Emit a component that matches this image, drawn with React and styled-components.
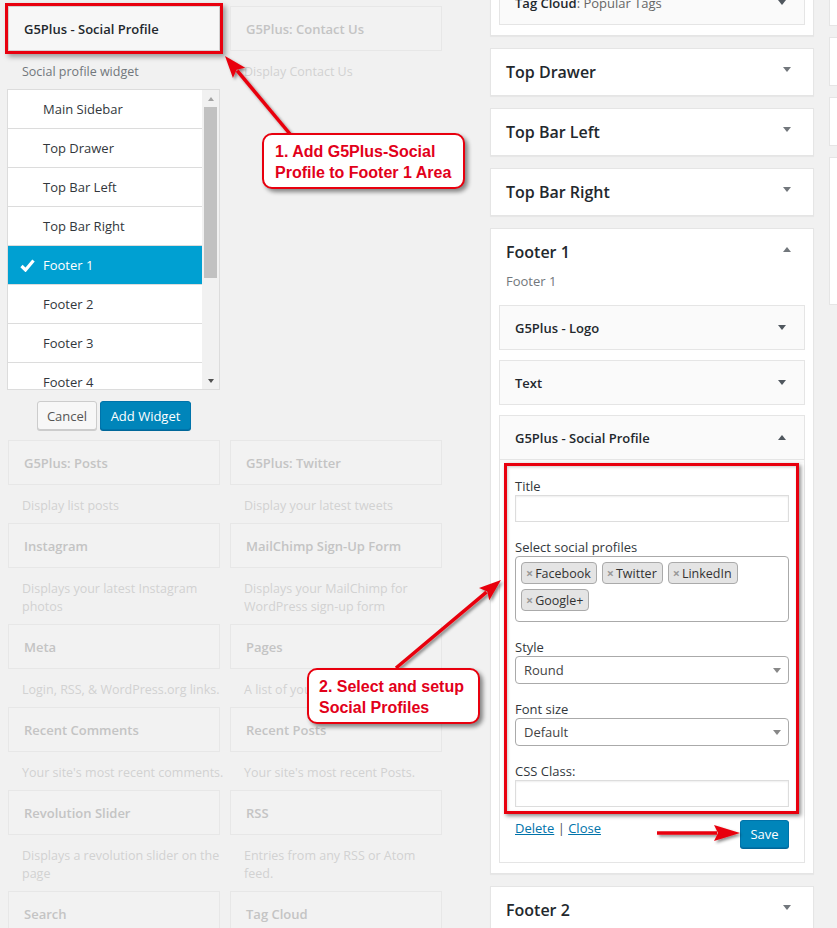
import React from "react";
import styled, { createGlobalStyle, css } from "styled-components";

const Global = createGlobalStyle`
  html, body { margin: 0; padding: 0; background: #f1f1f1; }
  body {
    font-family: "Open Sans", "Noto Sans", Arial, sans-serif;
    font-size: 13px;
    color: #444;
  }
  * { box-sizing: border-box; }
`;

const RED = "#e8000e";

const Page = styled.div`
  position: relative;
  width: 837px;
  height: 928px;
  overflow: hidden;
  display: flex;
  align-items: flex-start;
`;

/* ---------- available widgets ---------- */
const Available = styled.div`
  width: 442px;
  flex: none;
  padding: 6px 0 0 8px;
  display: grid;
  grid-template-columns: 212px 212px;
  column-gap: 10px;
  align-items: start;
`;

const WidgetItem = styled.div``;

const Tile = styled.div`
  height: 45px;
  border: 1px solid ${(p) => (p.$active ? "#d2d2d2" : "#e7e7e7")};
  background: ${(p) => (p.$active ? "#f7f7f7" : "#f2f2f2")};
  padding: 1px 15px 0;
  display: flex;
  align-items: center;
  font-weight: 600;
  font-size: 13px;
  color: ${(p) => (p.$active ? "#23282d" : "#c4c4c4")};
  white-space: nowrap;
  ${(p) =>
    p.$active &&
    css`
      box-shadow: 0 0 0 3px ${RED}, 3px 3px 5px 3px rgba(0, 0, 0, 0.35);
    `}
`;

const Desc = styled.div`
  margin: 12px 0 8px;
  padding: 0 0 0 14px;
  line-height: 18px;
  font-size: 12.5px;
  color: ${(p) => (p.$active ? "#72777c" : "#d2d2d2")};
`;

const DescLine = styled.span`
  display: block;
  white-space: nowrap;
`;

const ChooserList = styled.div`
  height: 301px;
  margin-left: -1px;
  border: 1px solid #dcdcdc;
  background: #fff;
  display: flex;
`;

const Items = styled.div`
  flex: 1;
  overflow: hidden;
`;

const Item = styled.div`
  height: 39px;
  border-bottom: 1px solid #dcdcdc;
  padding-left: 12px;
  display: flex;
  align-items: center;
  font-size: 13px;
  color: ${(p) => (p.$selected ? "#fff" : "#32373c")};
  background: ${(p) => (p.$selected ? "#00a0d2" : "#fff")};
`;

const CheckSlot = styled.span`
  width: 23px;
  flex: none;
  display: flex;
  align-items: center;
`;

const Track = styled.div`
  width: 17px;
  flex: none;
  background: #f1f1f1;
  display: flex;
  flex-direction: column;
`;

const TrackButton = styled.div`
  height: 17px;
  display: flex;
  align-items: center;
  justify-content: center;
`;

const Thumb = styled.div`
  height: 171px;
  margin: 0 2px;
  background: #c1c1c1;
`;

const TrackFill = styled.div`
  flex: 1;
`;

const Triangle = styled.span`
  display: inline-block;
  width: 0;
  height: 0;
  border-left: ${(p) => p.$w || 4}px solid transparent;
  border-right: ${(p) => p.$w || 4}px solid transparent;
  ${(p) =>
    p.$up
      ? css`border-bottom: ${p.$h || 5}px solid ${p.$c || "#72777c"};`
      : css`border-top: ${p.$h || 5}px solid ${p.$c || "#72777c"};`}
`;

const ButtonRow = styled.div`
  display: flex;
  gap: 3px;
  margin: 11px 0 10px;
  padding-left: 29px;
`;

const Button = styled.button`
  height: 29px;
  width: ${(p) => p.$w}px;
  padding: 0;
  border-radius: 3px;
  font-family: inherit;
  font-size: 13px;
  border: 1px solid ${(p) => (p.$primary ? "#0073aa" : "#cccccc")};
  background: ${(p) => (p.$primary ? "#0085ba" : "#f7f7f7")};
  color: ${(p) => (p.$primary ? "#fff" : "#555")};
  box-shadow: 0 1px 0 ${(p) => (p.$primary ? "#006799" : "#cccccc")};
`;

/* ---------- sidebars ---------- */
const Sidebars = styled.div`
  width: 324px;
  flex: none;
  margin: -21px 0 0 48px;
  display: flex;
  flex-direction: column;
  gap: 12px;
`;

const Panel = styled.div`
  background: #fff;
  border: 1px solid #e5e5e5;
  box-shadow: 0 1px 1px rgba(0, 0, 0, 0.04);
  padding: ${(p) => (p.$bare ? "0 8px 10px" : "0")};
`;

const PanelHeader = styled.div`
  display: flex;
  justify-content: space-between;
  padding: 11px 22px ${(p) => (p.$open ? 0 : 11)}px 15px;
`;

const PanelTitle = styled.h2`
  margin: 0;
  font-size: 16px;
  line-height: 24px;
  font-weight: 600;
  color: #23282d;
`;

const PanelArrow = styled.span`
  margin-top: 7px;
  display: flex;
`;

const PanelDesc = styled.div`
  margin: 8px 15px 15px;
  line-height: 18px;
  color: #72777c;
`;

const PanelBody = styled.div`
  padding: 0 8px 10px;
`;

const Widget = styled.div`
  border: 1px solid #e5e5e5;
  background: #fafafa;
  margin-bottom: ${(p) => (p.$last ? 0 : 10)}px;
`;

const WidgetHeader = styled.div`
  height: 43px;
  padding: 0 18px 0 15px;
  display: flex;
  align-items: center;
  justify-content: space-between;
  font-size: 13px;
  font-weight: 600;
  color: #23282d;
  ${(p) => p.$open && css`border-bottom: 1px solid #e5e5e5; height: 44px;`}
`;

const Light = styled.span`
  font-weight: 400;
  color: #666;
`;

const WidgetInside = styled.div`
  background: #fff;
  padding-bottom: 14px;
`;

const FormFrame = styled.div`
  margin: 3px 5px 0 4px;
  border: 3px solid ${RED};
  padding: 11px 7px 4px 8px;
  box-shadow: 2px 2px 4px rgba(0, 0, 0, 0.45), inset 1px 1px 3px rgba(0, 0, 0, 0.2);
`;

const Label = styled.div`
  line-height: 18px;
  color: #32373c;
  margin-top: ${(p) => (p.$first ? 0 : 16)}px;
`;

const TextInput = styled.div`
  height: 27px;
  border: 1px solid #ddd;
  background: #fff;
  box-shadow: inset 0 1px 2px rgba(0, 0, 0, 0.07);
`;

const MultiBox = styled.div`
  border: 1px solid #aaa;
  border-radius: 4px;
  padding: 5px 5px 10px;
  display: flex;
  flex-wrap: wrap;
  gap: 5px;
  background: #fff;
`;

const Tag = styled.span`
  height: 22px;
  display: inline-flex;
  align-items: center;
  padding: 0 5px 0 4px;
  border: 1px solid #aaa;
  border-radius: 4px;
  background: #e4e4e4;
  color: #333;
  font-size: 12.5px;
`;

const TagX = styled.span`
  color: #999;
  font-weight: 700;
  margin-right: 2px;
`;

const Select = styled.div`
  height: 28px;
  border: 1px solid #aaa;
  border-radius: 4px;
  padding: 0 7px 0 8px;
  display: flex;
  align-items: center;
  justify-content: space-between;
  color: #444;
  background: #fff;
`;

const Actions = styled.div`
  margin-top: 6px;
  padding: 0 15px;
  display: flex;
  justify-content: space-between;
  align-items: flex-start;
`;

const Links = styled.div`
  line-height: 16px;
  color: #555;
`;

const Link = styled.a`
  color: #0073aa;
  text-decoration: underline;
`;

const SaveButton = styled.button`
  height: 28px;
  width: 49px;
  padding: 0;
  border-radius: 3px;
  border: 1px solid #0073aa;
  background: #0085ba;
  color: #fff;
  font-family: inherit;
  font-size: 13px;
  box-shadow: 0 1px 0 #006799;
`;

/* ---------- third column ---------- */
const ThirdColumn = styled.div`
  width: 200px;
  flex: none;
  margin: -21px 0 0 15px;
  display: flex;
  flex-direction: column;
  gap: 11px;
`;

const StubPanel = styled.div`
  height: ${(p) => p.$h}px;
  background: #fff;
  border: 1px solid #e5e5e5;
`;

/* ---------- annotations ---------- */
const Callout = styled.div`
  position: absolute;
  left: ${(p) => p.$x}px;
  top: ${(p) => p.$y}px;
  width: ${(p) => p.$w}px;
  height: 56px;
  border: 2px solid ${RED};
  border-radius: 10px;
  background: #fff;
  box-shadow: 3px 3px 4px rgba(0, 0, 0, 0.45);
  padding: 6px 0 0 ${(p) => p.$pad}px;
  font-family: "Liberation Sans", Arial, sans-serif;
  font-weight: 700;
  font-size: 16px;
  line-height: 21px;
  color: #e2001a;
  white-space: nowrap;
`;

const Overlay = styled.svg`
  position: absolute;
  left: 0;
  top: 0;
  pointer-events: none;
`;

function Arrow({ x1, y1, x2, y2, head = 22, half = 8 }) {
  const dx = x2 - x1;
  const dy = y2 - y1;
  const len = Math.hypot(dx, dy);
  const ux = dx / len;
  const uy = dy / len;
  const bx = x2 - ux * head;
  const by = y2 - uy * head;
  const px = -uy;
  const py = ux;
  const pts = `${x2},${y2} ${bx + px * half},${by + py * half} ${bx + ux * 4},${by + uy * 4} ${bx - px * half},${by - py * half}`;
  return (
    <g filter="url(#arrowShadow)">
      <line x1={x1} y1={y1} x2={bx + ux * 3} y2={by + uy * 3} stroke={RED} strokeWidth="3.5" />
      <polygon points={pts} fill={RED} />
    </g>
  );
}

const Check = () => (
  <svg width="15" height="13" viewBox="0 0 15 13">
    <polyline points="1.5,7 5.5,11 13.5,1.5" fill="none" stroke="#fff" strokeWidth="3.2" />
  </svg>
);

const rows = [
  [["G5Plus: Posts", ["Display list posts"]], ["G5Plus: Twitter", ["Display your latest tweets"]]],
  [
    ["Instagram", ["Displays your latest Instagram", "photos"]],
    ["MailChimp Sign-Up Form", ["Displays your MailChimp for", "WordPress sign-up form"]],
  ],
  [["Meta", ["Login, RSS, & WordPress.org links."]], ["Pages", ["A list of your site's Pages."]]],
  [
    ["Recent Comments", ["Your site's most recent comments."]],
    ["Recent Posts", ["Your site's most recent Posts."]],
  ],
  [
    ["Revolution Slider", ["Displays a revolution slider on the", "page"]],
    ["RSS", ["Entries from any RSS or Atom", "feed."]],
  ],
  [["Search", ["A search form for your site."]], ["Tag Cloud", ["A cloud of your most used tags."]]],
];

const areas = ["Main Sidebar", "Top Drawer", "Top Bar Left", "Top Bar Right", "Footer 1", "Footer 2", "Footer 3", "Footer 4"];

function AvailableWidget({ title, lines }) {
  return (
    <WidgetItem>
      <Tile>{title}</Tile>
      <Desc>
        {lines.map((l) => (
          <DescLine key={l}>{l}</DescLine>
        ))}
      </Desc>
    </WidgetItem>
  );
}

export default function App() {
  return (
    <>
      <Global />
      <Page>
        <Available>
          <WidgetItem>
            <Tile $active>G5Plus - Social Profile</Tile>
            <Desc $active>Social profile widget</Desc>
            <ChooserList>
              <Items>
                {areas.map((a) => (
                  <Item key={a} $selected={a === "Footer 1"}>
                    <CheckSlot>{a === "Footer 1" && <Check />}</CheckSlot>
                    {a}
                  </Item>
                ))}
              </Items>
              <Track>
                <TrackButton>
                  <Triangle $up $w={3.5} $h={4} $c="#a3a3a3" />
                </TrackButton>
                <Thumb />
                <TrackFill />
                <TrackButton>
                  <Triangle $w={3.5} $h={4} $c="#505050" />
                </TrackButton>
              </Track>
            </ChooserList>
            <ButtonRow>
              <Button $w={60}>Cancel</Button>
              <Button $primary $w={91}>
                Add Widget
              </Button>
            </ButtonRow>
          </WidgetItem>
          <AvailableWidget title="G5Plus: Contact Us" lines={["Display Contact Us"]} />
          {rows.map(([a, b]) => (
            <React.Fragment key={a[0]}>
              <AvailableWidget title={a[0]} lines={a[1]} />
              <AvailableWidget title={b[0]} lines={b[1]} />
            </React.Fragment>
          ))}
        </Available>

        <Sidebars>
          <Panel $bare>
            <Widget $last>
              <WidgetHeader>
                <span>
                  Tag Cloud<Light>: Popular Tags</Light>
                </span>
                <Triangle $c="#50575e" />
              </WidgetHeader>
            </Widget>
          </Panel>
          {["Top Drawer", "Top Bar Left", "Top Bar Right"].map((t) => (
            <Panel key={t}>
              <PanelHeader>
                <PanelTitle>{t}</PanelTitle>
                <PanelArrow>
                  <Triangle />
                </PanelArrow>
              </PanelHeader>
            </Panel>
          ))}
          <Panel>
            <PanelHeader $open>
              <PanelTitle>Footer 1</PanelTitle>
              <PanelArrow>
                <Triangle $up />
              </PanelArrow>
            </PanelHeader>
            <PanelDesc>Footer 1</PanelDesc>
            <PanelBody>
              <Widget>
                <WidgetHeader>
                  G5Plus - Logo
                  <Triangle $c="#50575e" />
                </WidgetHeader>
              </Widget>
              <Widget>
                <WidgetHeader>
                  Text
                  <Triangle $c="#50575e" />
                </WidgetHeader>
              </Widget>
              <Widget $last>
                <WidgetHeader $open>
                  G5Plus - Social Profile
                  <Triangle $up $c="#50575e" />
                </WidgetHeader>
                <WidgetInside>
                  <FormFrame>
                    <Label $first>Title</Label>
                    <TextInput />
                    <Label>Select social profiles</Label>
                    <MultiBox>
                      {["Facebook", "Twitter", "LinkedIn", "Google+"].map((s) => (
                        <Tag key={s}>
                          <TagX>×</TagX>
                          {s}
                        </Tag>
                      ))}
                    </MultiBox>
                    <Label>Style</Label>
                    <Select>
                      Round
                      <Triangle $c="#888" />
                    </Select>
                    <Label>Font size</Label>
                    <Select>
                      Default
                      <Triangle $c="#888" />
                    </Select>
                    <Label>CSS Class:</Label>
                    <TextInput />
                  </FormFrame>
                  <Actions>
                    <Links>
                      <Link>Delete</Link> | <Link>Close</Link>
                    </Links>
                    <SaveButton>Save</SaveButton>
                  </Actions>
                </WidgetInside>
              </Widget>
            </PanelBody>
          </Panel>
          <Panel>
            <PanelHeader>
              <PanelTitle>Footer 2</PanelTitle>
              <PanelArrow>
                <Triangle />
              </PanelArrow>
            </PanelHeader>
          </Panel>
        </Sidebars>

        <ThirdColumn>
          <StubPanel $h={47} />
          <StubPanel $h={49} />
          <StubPanel $h={49} />
          <StubPanel $h={148} />
        </ThirdColumn>

        <Overlay width="837" height="928" viewBox="0 0 837 928">
          <defs>
            <filter id="arrowShadow" x="-20%" y="-20%" width="140%" height="140%">
              <feDropShadow dx="2" dy="2" stdDeviation="1.5" floodColor="#000" floodOpacity="0.45" />
            </filter>
          </defs>
          <Arrow x1={290} y1={134} x2={225} y2={56} />
          <Arrow x1={396} y1={668} x2={501} y2={580} />
          <Arrow x1={657} y1={833} x2={740} y2={833} head={26} half={8} />
        </Overlay>

        <Callout $x={262} $y={133} $w={203} $pad={11}>
          1. Add G5Plus-Social
          <br />
          Profile to Footer 1 Area
        </Callout>
        <Callout $x={307} $y={668} $w={173} $pad={10}>
          2. Select and setup
          <br />
          Social Profiles
        </Callout>
      </Page>
    </>
  );
}
